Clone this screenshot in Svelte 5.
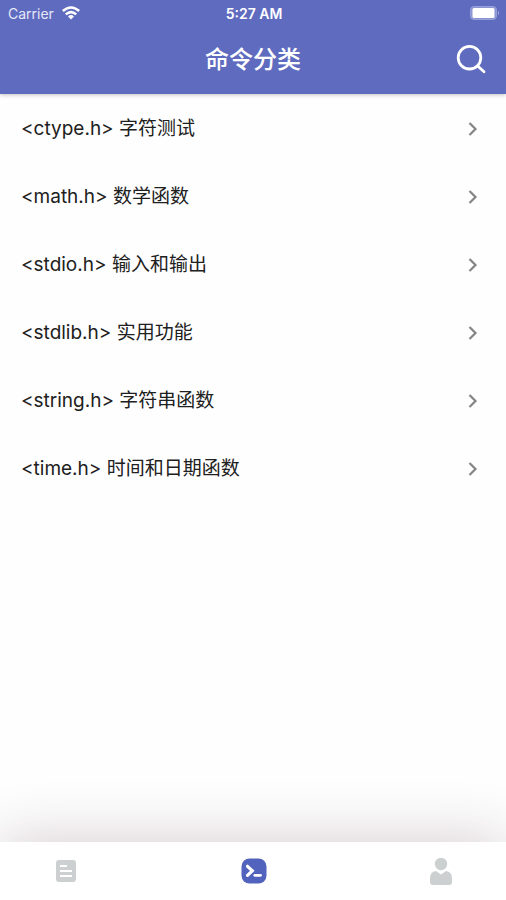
<script lang="ts">
  interface Category {
    header: string;
    label: string;
  }

  const categories: Category[] = [
    { header: "<ctype.h>", label: "字符测试" },
    { header: "<math.h>", label: "数学函数" },
    { header: "<stdio.h>", label: "输入和输出" },
    { header: "<stdlib.h>", label: "实用功能" },
    { header: "<string.h>", label: "字符串函数" },
    { header: "<time.h>", label: "时间和日期函数" }
  ];

  const tabs = [
    { id: "articles", label: "文章" },
    { id: "commands", label: "命令" },
    { id: "profile", label: "我的" }
  ];

  let activeTab = $state("commands");
</script>

<div class="screen">
  <header>
    <div class="status-bar">
      <span class="carrier">
        Carrier
        <svg width="18" height="14" viewBox="0 0 18 14" aria-hidden="true">
          <g fill="none" stroke="#fff" stroke-width="2.6">
            <path d="M0.8 5 Q9 -2 17.2 5" />
            <path d="M3.8 8.4 Q9 3.8 14.2 8.4" />
          </g>
          <path d="M6 10.4 Q9 7.8 12 10.4 L9 13.6Z" fill="#fff" />
        </svg>
      </span>
      <span class="time">5:27 AM</span>
      <svg class="battery" width="30" height="14" viewBox="0 0 30 14" aria-hidden="true">
        <rect x="0.5" y="0.5" width="26" height="13" rx="3.5" fill="#8b94d2" stroke="#969fd7" />
        <rect x="2.5" y="2" width="22" height="10" rx="1.5" fill="#fff" />
        <path d="M28 4.5 Q30 7 28 9.5Z" fill="#a3aadc" />
      </svg>
    </div>
    <div class="app-bar">
      <h1>命令分类</h1>
      <button class="search" aria-label="搜索">
        <svg width="30" height="30" viewBox="0 0 30 30" fill="none" stroke="#fff" stroke-width="2.8" stroke-linecap="round">
          <circle cx="13.5" cy="12.7" r="11.3" />
          <path d="M21.7 21 L28 26.7" />
        </svg>
      </button>
    </div>
  </header>

  <main>
    <ul>
      {#each categories as category (category.header)}
        <li>
          <button class="row">
            <span>{category.header} {category.label}</span>
            <svg width="10" height="14" viewBox="0 0 10 14" fill="none" stroke="#858585" stroke-width="2.2" aria-hidden="true">
              <path d="M1.5 1 L7.5 7 L1.5 13" />
            </svg>
          </button>
        </li>
      {/each}
    </ul>
  </main>

  <nav>
    {#each tabs as tab (tab.id)}
      <button
        class="tab"
        aria-label={tab.label}
        aria-current={activeTab === tab.id ? "page" : undefined}
        onclick={() => (activeTab = tab.id)}
      >
        <svg width="28" height="28" viewBox="0 0 28 28" fill="currentColor" aria-hidden="true">
          {#if tab.id === "articles"}
            <rect x="4" y="3" width="20" height="22" rx="3" />
            <path d="M8 9H15M8 14H20M8 19H20" stroke="#fff" stroke-width="1.8" />
          {:else if tab.id === "commands"}
            <rect x="1.5" y="1.5" width="25" height="25" rx="8" />
            <path d="M7.5 9.3 L12.3 13.8 L7.5 18.3" fill="none" stroke="#fff" stroke-width="3.2" stroke-linecap="round" />
            <path d="M14.8 18.3H20.5" stroke="#fff" stroke-width="2.8" stroke-linecap="round" />
          {:else}
            <circle cx="14" cy="7" r="6.2" />
            <path d="M9 14 L14 17.5 L19 14 Q25 15 25 21 V25 Q25 28 22 28 H6 Q3 28 3 25 V21 Q3 15 9 14Z" />
          {/if}
        </svg>
      </button>
    {/each}
  </nav>
</div>

<style>
  :global(body) {
    margin: 0;
    background: #fff;
  }

  .screen {
    display: flex;
    flex-direction: column;
    min-height: 100vh;
    overflow: hidden;
    background: #fefefe;
    font-family: Inter, "Noto Sans CJK SC", sans-serif;
  }

  button {
    padding: 0;
    border: 0;
    background: none;
    color: inherit;
    font: inherit;
    cursor: pointer;
  }

  svg {
    display: block;
    flex: none;
  }

  header {
    background: #5f6bbf;
    box-shadow: 0 1px 4px rgba(0, 0, 0, 0.24);
    color: #fff;
  }

  .status-bar {
    display: grid;
    grid-template-columns: 1fr auto 1fr;
    align-items: center;
    height: 26px;
    padding: 0 6px 0 8px;
    font-size: 14px;
  }

  .carrier {
    display: flex;
    align-items: center;
    gap: 8px;
    color: #e6e8f7;
  }

  .time {
    font-weight: 600;
  }

  .battery {
    justify-self: end;
  }

  .app-bar {
    display: grid;
    grid-template-columns: 1fr auto 1fr;
    align-items: center;
    height: 68px;
    padding: 0 20px;
  }

  h1 {
    grid-column: 2;
    margin: 0;
    font-size: 24px;
    font-weight: 500;
    line-height: 32px;
  }

  .search {
    justify-self: end;
  }

  main {
    flex: 1;
  }

  ul {
    margin: 0;
    padding: 1px 0 0;
    list-style: none;
  }

  .row {
    display: flex;
    align-items: center;
    justify-content: space-between;
    width: 100%;
    height: 68px;
    padding: 0 28px 0 21px;
    color: #202020;
    font-size: 19px;
    line-height: 24px;
    text-align: left;
  }

  nav {
    display: flex;
    justify-content: space-between;
    height: 58px;
    padding: 0 37px 0 38px;
    background: #fff;
    box-shadow: 0 0 60px rgba(70, 35, 55, 0.24);
  }

  .tab {
    display: grid;
    place-items: center;
    width: 56px;
    color: #cdd0d0;
  }

  .tab[aria-current="page"] {
    color: #5263bd;
  }
</style>
